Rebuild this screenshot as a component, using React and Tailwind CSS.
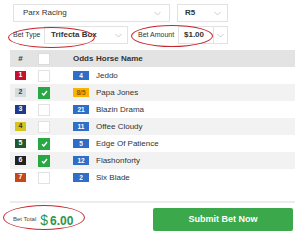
const horses = [
  { no: "1", badge: "bg-[#c8102e] text-white", odds: "4", fav: false, checked: false, name: "Jeddo" },
  { no: "2", badge: "bg-[#d5dade] text-[#333]", odds: "8/5", fav: true, checked: true, name: "Papa Jones" },
  { no: "3", badge: "bg-[#1d3b8c] text-white", odds: "21", fav: false, checked: false, name: "Blazin Drama" },
  { no: "4", badge: "bg-[#d6c41e] text-[#333]", odds: "11", fav: false, checked: false, name: "Offee Cloudy" },
  { no: "5", badge: "bg-[#1f5a2b] text-white", odds: "5", fav: false, checked: true, name: "Edge Of Patience" },
  { no: "6", badge: "bg-[#222222] text-white", odds: "12", fav: false, checked: true, name: "Flashonforty" },
  { no: "7", badge: "bg-[#c5471c] text-white", odds: "2", fav: false, checked: false, name: "Six Blade" },
];

function Chevron() {
  return (
    <svg width="7" height="5" viewBox="0 0 7 5" className="shrink-0">
      <polyline points="0.5,1 3.5,4 6.5,1" fill="none" stroke="#c0c7ce" strokeWidth="0.9" />
    </svg>
  );
}

function Check() {
  return (
    <svg width="7" height="6" viewBox="0 0 7 6">
      <polyline points="1,3.2 2.8,5 6,1" fill="none" stroke="white" strokeWidth="1.4" />
    </svg>
  );
}

export default function App() {
  return (
    <div className="relative w-[300px] h-[240px] bg-white overflow-hidden font-['Liberation_Sans',Arial,sans-serif] text-[#333]">
      {/* selects */}
      <div className="flex gap-[7px] pl-[13px] pt-[4px]">
        <div className="w-[157px] h-[18px] border border-[#e2e2e2] flex items-center justify-between pl-[9px] pr-[8px] text-[8px]">
          <span>Parx Racing</span>
          <Chevron />
        </div>
        <div className="w-[51px] h-[18px] border border-[#e2e2e2] flex items-center justify-between pl-[7px] pr-[6px] text-[8px] font-bold">
          <span>R5</span>
          <Chevron />
        </div>
      </div>

      <div className="flex items-center pl-[13px] pt-[4px] h-[22px]">
        <span className="w-[31px] text-[7px]">Bet Type</span>
        <div className="w-[84px] h-[18px] border border-[#e2e2e2] flex items-center justify-between pl-[6px] pr-[5px] text-[8px] font-bold">
          <span>Trifecta Box</span>
          <Chevron />
        </div>
        <span className="ml-[10px] w-[40px] text-[7px]">Bet Amount</span>
        <div className="w-[50px] h-[18px] border border-[#e2e2e2] flex items-center text-[8px] font-bold">
          <span className="w-[35px] h-full flex items-center pl-[5px] border-r border-[#e2e2e2]">$1.00</span>
          <span className="flex-1 flex justify-center"><Chevron /></span>
        </div>
      </div>

      {/* table */}
      <div className="mx-[10px] mt-[6px] w-[285px] text-[8px]">
        <div className="h-[17px] bg-[#e3e3e3] flex items-center pl-[5px] font-bold">
          <span className="w-[11px] text-center">#</span>
          <span className="ml-[12px] w-[12px] h-[12px] bg-white border border-[#dcdcdc]" />
          <span className="ml-[23px] w-[23px]">Odds</span>
          <span>Horse Name</span>
        </div>
        {horses.map((h, i) => (
          <div key={i} className={`h-[17px] flex items-center pl-[5px] ${i % 2 === 1 ? "bg-[#f2f2f2]" : "bg-white"}`}>
            <span className={`w-[11px] h-[9px] flex items-center justify-center text-[7px] font-bold ${h.badge}`}>{h.no}</span>
            {h.checked ? (
              <span className="ml-[12px] w-[12px] h-[12px] bg-[#28a745] flex items-center justify-center">
                <Check />
              </span>
            ) : (
              <span className="ml-[12px] w-[12px] h-[12px] bg-white border border-[#e2e2e2]" />
            )}
            <span className={`ml-[23px] w-[16px] h-[9px] flex items-center justify-center text-[6.5px] font-bold ${h.fav ? "bg-[#f8b500] text-[#8a5a00]" : "bg-[#2e6ec6] text-white"}`}>
              {h.odds}
            </span>
            <span className="ml-[7px]">{h.name}</span>
          </div>
        ))}
      </div>

      <div className="mx-[10px] mt-[15px] w-[285px] h-[2px] bg-[#ececec]" />

      {/* footer */}
      <div className="flex items-center justify-between pl-[13px] pr-[7px] mt-[5px]">
        <div className="flex items-center gap-[4px]">
          <span className="text-[6px] text-[#444]">Bet Total</span>
          <span className="text-[12px] font-bold text-[#2a9646] leading-none">
            <span className="text-[14px] font-normal mr-[2px]">$</span>6.00
          </span>
        </div>
        <button className="w-[140px] h-[23px] bg-[#3aa84b] rounded-[2px] text-white text-[9px] font-bold">
          Submit Bet Now
        </button>
      </div>

      {/* annotation ellipses */}
      <div className="absolute left-[8px] top-[27px] w-[87px] h-[21px] rounded-[50%] border-[1.5px] border-[#c4262c]" />
      <div className="absolute left-[131px] top-[25px] w-[82px] h-[22px] rounded-[50%] border-[1.5px] border-[#c4262c]" />
      <div className="absolute left-[3px] top-[205px] w-[82px] h-[25px] rounded-[50%] border-[1.5px] border-[#c4262c]" />
    </div>
  );
}
